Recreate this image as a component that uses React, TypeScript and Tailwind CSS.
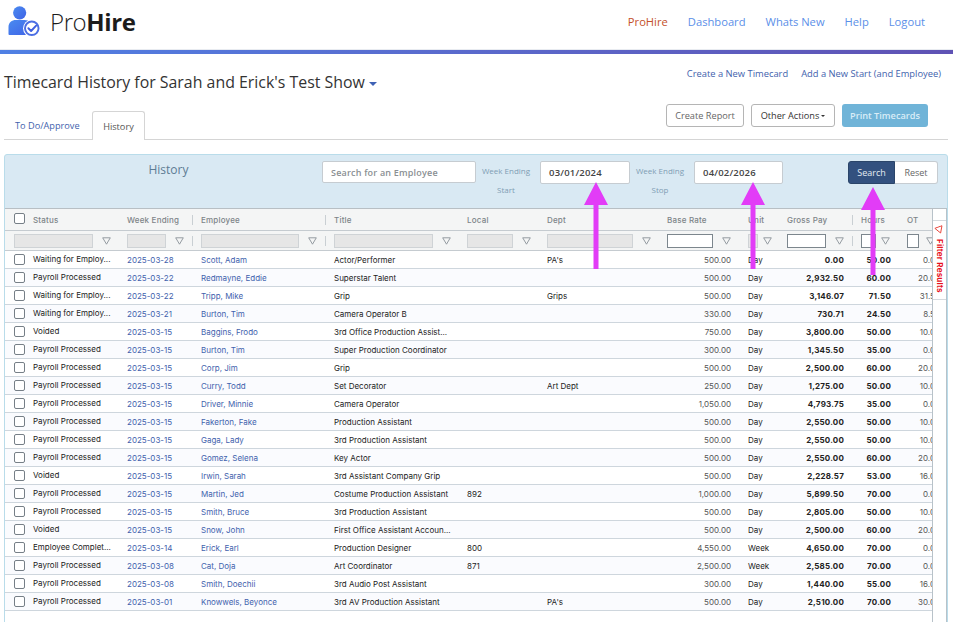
import React from 'react';

type Row = {
  status: string;
  week: string;
  employee: string;
  title: string;
  local?: string;
  dept?: string;
  rate: string;
  unit: string;
  gross: string;
  hours: string;
  ot: string;
};

const WAIT = 'Waiting for Employ...';
const PP = 'Payroll Processed';

const rows: Row[] = [
  { status: WAIT, week: '2025-03-28', employee: 'Scott, Adam', title: 'Actor/Performer', dept: "PA's", rate: '500.00', unit: 'Day', gross: '0.00', hours: '50.00', ot: '0.00' },
  { status: PP, week: '2025-03-22', employee: 'Redmayne, Eddie', title: 'Superstar Talent', rate: '500.00', unit: 'Day', gross: '2,932.50', hours: '60.00', ot: '20.00' },
  { status: WAIT, week: '2025-03-22', employee: 'Tripp, Mike', title: 'Grip', dept: 'Grips', rate: '500.00', unit: 'Day', gross: '3,146.07', hours: '71.50', ot: '31.50' },
  { status: WAIT, week: '2025-03-21', employee: 'Burton, Tim', title: 'Camera Operator B', rate: '330.00', unit: 'Day', gross: '730.71', hours: '24.50', ot: '8.50' },
  { status: 'Voided', week: '2025-03-15', employee: 'Baggins, Frodo', title: '3rd Office Production Assist...', rate: '750.00', unit: 'Day', gross: '3,800.00', hours: '50.00', ot: '10.00' },
  { status: PP, week: '2025-03-15', employee: 'Burton, Tim', title: 'Super Production Coordinator', rate: '300.00', unit: 'Day', gross: '1,345.50', hours: '35.00', ot: '0.00' },
  { status: PP, week: '2025-03-15', employee: 'Corp, Jim', title: 'Grip', rate: '500.00', unit: 'Day', gross: '2,500.00', hours: '60.00', ot: '20.00' },
  { status: PP, week: '2025-03-15', employee: 'Curry, Todd', title: 'Set Decorator', dept: 'Art Dept', rate: '250.00', unit: 'Day', gross: '1,275.00', hours: '50.00', ot: '10.00' },
  { status: PP, week: '2025-03-15', employee: 'Driver, Minnie', title: 'Camera Operator', rate: '1,050.00', unit: 'Day', gross: '4,793.75', hours: '35.00', ot: '0.00' },
  { status: PP, week: '2025-03-15', employee: 'Fakerton, Fake', title: 'Production Assistant', rate: '500.00', unit: 'Day', gross: '2,550.00', hours: '50.00', ot: '10.00' },
  { status: PP, week: '2025-03-15', employee: 'Gaga, Lady', title: '3rd Production Assistant', rate: '500.00', unit: 'Day', gross: '2,550.00', hours: '50.00', ot: '10.00' },
  { status: PP, week: '2025-03-15', employee: 'Gomez, Selena', title: 'Key Actor', rate: '500.00', unit: 'Day', gross: '2,550.00', hours: '60.00', ot: '20.00' },
  { status: 'Voided', week: '2025-03-15', employee: 'Irwin, Sarah', title: '3rd Assistant Company Grip', rate: '500.00', unit: 'Day', gross: '2,228.57', hours: '53.00', ot: '16.00' },
  { status: PP, week: '2025-03-15', employee: 'Martin, Jed', title: 'Costume Production Assistant', local: '892', rate: '1,000.00', unit: 'Day', gross: '5,899.50', hours: '70.00', ot: '0.00' },
  { status: PP, week: '2025-03-15', employee: 'Smith, Bruce', title: '3rd Production Assistant', rate: '500.00', unit: 'Day', gross: '2,805.00', hours: '50.00', ot: '10.00' },
  { status: 'Voided', week: '2025-03-15', employee: 'Snow, John', title: 'First Office Assistant Accoun...', rate: '500.00', unit: 'Day', gross: '2,500.00', hours: '60.00', ot: '20.00' },
  { status: 'Employee Complet...', week: '2025-03-14', employee: 'Erick, Earl', title: 'Production Designer', local: '800', rate: '4,550.00', unit: 'Week', gross: '4,650.00', hours: '70.00', ot: '0.00' },
  { status: PP, week: '2025-03-08', employee: 'Cat, Doja', title: 'Art Coordinator', local: '871', rate: '2,500.00', unit: 'Week', gross: '2,585.00', hours: '70.00', ot: '0.00' },
  { status: PP, week: '2025-03-08', employee: 'Smith, Doechii', title: '3rd Audio Post Assistant', rate: '300.00', unit: 'Day', gross: '1,440.00', hours: '55.00', ot: '16.00' },
  { status: PP, week: '2025-03-01', employee: 'Knowwels, Beyonce', title: '3rd AV Production Assistant', dept: "PA's", rate: '500.00', unit: 'Day', gross: '2,510.00', hours: '70.00', ot: '30.00' },
];

// shared by header, filter row and body so the columns line up
const GRID = 'grid grid-cols-[28px_94px_74px_133px_133px_80px_120px_81px_39px_74px_46px_49px] w-[951px]';

const Funnel = () => (
  <svg width="9" height="8" viewBox="0 0 9 8" className="shrink-0" fill="none" stroke="#8a9299" strokeWidth="0.9">
    <path d="M0.7 0.8H8.3L4.5 7.2Z" />
  </svg>
);

const Check = () => <span className="block w-[11px] h-[11px] rounded-[2px] border border-[#767f87] bg-white" />;

const Sep = () => <span className="absolute left-[-9px] top-[1px] w-px h-[10px] bg-[#c9cfd3]" />;

const HeadCell = ({ label, sep }: { label: string; sep?: boolean }) => (
  <div className="relative flex items-center text-[8px] font-medium tracking-[0.2px] text-[#7d8488]">
    <span className="relative">
      {sep && <Sep />}
      {label}
    </span>
  </div>
);

const FilterCell = ({ w, gap, white, sep }: { w: number; gap: number; white?: boolean; sep?: boolean }) => (
  <div className="relative flex items-center">
    {sep && <span className="absolute left-[-9px] top-[5px] w-px h-[10px] bg-[#c9cfd3]" />}
    <span
      className={white ? 'block h-[14px] bg-white border border-[#7c868d]' : 'block h-[14px] bg-[#e6e6e6] border border-[#cfd3d6]'}
      style={{ width: w, marginRight: gap }}
    />
    <Funnel />
  </div>
);

const Arrow = ({ left, top, height }: { left: number; top: number; height: number }) => (
  <svg
    className="absolute z-10"
    style={{ left, top }}
    width="24"
    height={height}
    viewBox={`0 0 24 ${height}`}
    fill="#e23cf7"
  >
    <path d={`M12 0L24 23H14.5V${height}H9.5V23H0Z`} />
  </svg>
);

const Logo = () => (
  <svg width="33" height="32" viewBox="0 2.5 34 33" className="shrink-0">
    <defs>
      <linearGradient id="lg" x1="0" y1="0" x2="1" y2="1">
        <stop offset="0" stopColor="#4a8bf0" />
        <stop offset="1" stopColor="#3f63e6" />
      </linearGradient>
    </defs>
    <circle cx="12" cy="9.5" r="6.8" fill="url(#lg)" />
    <path d="M0.5 31V24C0.5 19.5 4 17 8 17H17C22 17 24 20 24 24V31C24 32 23 32.5 22 32.5H2C1 32.5 0.5 32 0.5 31Z" fill="url(#lg)" />
    <circle cx="24.5" cy="25.5" r="9" fill="#fff" />
    <circle cx="24.5" cy="25.5" r="7" fill="#fff" stroke="#4c6fe4" strokeWidth="2" />
    <path d="M21 25.5L23.8 28.3L29 22.8" fill="none" stroke="#3f5fe0" strokeWidth="2" strokeLinecap="round" strokeLinejoin="round" />
  </svg>
);

export default function App() {
  return (
    <div className="relative w-[953px] h-[622px] overflow-hidden bg-white font-['Open_Sans',sans-serif]">
      {/* top nav */}
      <header className="h-[50px] flex items-center justify-between pl-[8px] pr-[28px] border-b border-[#e8ebf0]">
        <div className="flex items-center gap-[9px] pb-[6px]">
          <Logo />
          <span className="text-[24px] leading-none text-[#1c1c1c] tracking-[-0.4px] font-light">
            Pro<span className="font-bold">Hire</span>
          </span>
        </div>
        <nav className="flex gap-[20px] text-[11.2px] text-[#5b8fe8] pb-[5px]">
          <a className="text-[#c4502a]">ProHire</a>
          <a>Dashboard</a>
          <a>Whats New</a>
          <a>Help</a>
          <a>Logout</a>
        </nav>
      </header>
      <div className="h-[4px] bg-gradient-to-r from-[#4f80e4] to-[#5f52b4]" />

      {/* title row */}
      <div className="flex justify-between items-start pl-[4px] pr-[12px] h-[50px]">
        <h1 className="mt-[17px] h-[22px] text-[15.9px] leading-[22px] text-[#333] flex items-center gap-[4px]">
          Timecard History for Sarah and Erick's Test Show
          <span className="mt-[3px] w-0 h-0 border-x-[4px] border-x-transparent border-t-[4px] border-t-[#3f62b5]" />
        </h1>
        <div className="mt-[13px] flex gap-[13px] text-[9.35px] leading-[13px] text-[#3f62ad]">
          <a>Create a New Timecard</a>
          <a>Add a New Start (and Employee)</a>
        </div>
      </div>

      {/* tabs and actions */}
      <div className="flex justify-between items-end h-[36px] mx-[4px] mr-[5px] border-b border-[#d5d5d5]">
        <div className="flex h-[28px] text-[9.2px]">
          <a className="pl-[11px] pr-[12px] pt-[1px] flex items-center text-[#3f62ad]">To Do/Approve</a>
          <span className="px-[10.5px] pt-[1px] flex items-center text-[#555] bg-white border border-b-0 border-[#d5d5d5] rounded-t-[3px] mb-[-1px] h-[29px]">
            History
          </span>
        </div>
        <div className="flex gap-[7px] mb-[12px] mr-[20px] text-[9.2px]">
          <span className="h-[23px] w-[78px] flex items-center justify-center rounded-[3px] border border-[#b5b5b5] text-[#666]">Create Report</span>
          <span className="h-[23px] w-[84px] flex items-center justify-center gap-[2px] rounded-[3px] border border-[#b5b5b5] text-[#333]">
            Other Actions
            <span className="w-0 h-0 border-x-[2px] border-x-transparent border-t-[2px] border-t-[#333]" />
          </span>
          <span className="h-[23px] w-[86px] flex items-center justify-center rounded-[3px] bg-[#70b4d8] text-[#d9edf7] font-semibold">Print Timecards</span>
        </div>
      </div>

      {/* history panel */}
      <section className="mt-[14px] ml-[4px] w-[944px] h-[480px] bg-[#d9e9f3] border border-[#b9dcea] rounded-t-[3px]">
        <div className="relative h-[53px] flex">
          <div className="w-[317px] text-center text-[12px] text-[#5d7c93] pt-[6px] pl-[10px] leading-[18px]">History</div>
          <input
            readOnly
            placeholder="Search for an Employee"
            className="mt-[6px] w-[154px] h-[22px] bg-white rounded-[2px] border border-[#c6ccd1] px-[8px] text-[9px] font-semibold tracking-[0.2px] placeholder:text-[#8a8f93]"
          />
          <div className="w-[64px] pr-[4px] text-center text-[8px] leading-[19px] text-[#7f9db3] pt-[6px]">
            <div>Week Ending</div>
            <div>Start</div>
          </div>
          <div className="mt-[6px] w-[90px] h-[23px] bg-white rounded-[2px] border border-[#c6ccd1] pl-[8px] text-[9.5px] font-semibold leading-[21px] tracking-[0.2px] text-[#444]">03/01/2024</div>
          <div className="w-[64px] pr-[4px] text-center text-[8px] leading-[19px] text-[#7f9db3] pt-[6px]">
            <div>Week Ending</div>
            <div>Stop</div>
          </div>
          <div className="mt-[6px] w-[89px] h-[23px] bg-white rounded-[2px] border border-[#c6ccd1] pl-[8px] text-[9.5px] font-semibold leading-[21px] tracking-[0.2px] text-[#444]">04/02/2026</div>
          <div className="mt-[6px] ml-[65px] flex text-[9px]">
            <span className="w-[47px] h-[23px] flex items-center justify-center bg-[#33517f] text-[#e4ebf3] rounded-l-[3px] border border-[#2b4569]">Search</span>
            <span className="w-[43px] h-[23px] flex items-center justify-center bg-white text-[#666] rounded-r-[3px] border border-l-0 border-[#c6ccd1]">Reset</span>
          </div>
        </div>

        <div className="flex h-[430px] bg-white border-t border-[#b8bfc4] font-['Inter',sans-serif]">
          {/* table */}
          <div className="w-[927px] overflow-hidden shrink-0">
            <div className={`${GRID} h-[22px] bg-[#f4f5f5] border-b border-[#c5cbd0]`}>
              <div className="flex items-center pl-[9px] pb-[3px]"><Check /></div>
              <HeadCell label="Status" />
              <HeadCell label="Week Ending" />
              <HeadCell label="Employee" sep />
              <HeadCell label="Title" sep />
              <HeadCell label="Local" />
              <HeadCell label="Dept" />
              <HeadCell label="Base Rate" />
              <HeadCell label="Unit" />
              <HeadCell label="Gross Pay" />
              <HeadCell label="Hours" sep />
              <HeadCell label="OT" />
            </div>
            <div className={`${GRID} h-[20px] bg-[#f4f5f5] border-b border-[#c5cbd0]`}>
              <div className="col-span-2 flex items-center pl-[9px]">
                <span className="block w-[79px] h-[14px] bg-[#e6e6e6] border border-[#cfd3d6] mr-[9px]" />
                <Funnel />
              </div>
              <FilterCell w={39} gap={9} />
              <FilterCell w={98} gap={9} sep />
              <FilterCell w={99} gap={9} sep />
              <FilterCell w={46} gap={9} />
              <FilterCell w={86} gap={9} />
              <FilterCell w={46} gap={9} white />
              <FilterCell w={10} gap={5} />
              <FilterCell w={39} gap={9} white />
              <FilterCell w={15} gap={5} white sep />
              <FilterCell w={12} gap={7} white />
            </div>
            {rows.map((r, i) => (
              <div
                key={i}
                className={`${GRID} h-[18px] border-b border-[#ced6dd] text-[8px] text-[#222] ${i % 2 ? 'bg-[#fafbfe]' : 'bg-white'}`}
              >
                <div className="flex items-center pl-[9px]"><Check /></div>
                <div className="flex items-center pb-[2px] whitespace-nowrap">{r.status}</div>
                <div className="flex items-center text-[#3f62ad]">{r.week}</div>
                <div className="flex items-center text-[#3f62ad]">{r.employee}</div>
                <div className="flex items-center whitespace-nowrap">{r.title}</div>
                <div className="flex items-center">{r.local}</div>
                <div className="flex items-center">{r.dept}</div>
                <div className="flex items-center justify-end pr-[17px] text-[#555]">{r.rate}</div>
                <div className="flex items-center">{r.unit}</div>
                <div className="flex items-center justify-end pr-[17px] font-bold tracking-[0.2px]">{r.gross}</div>
                <div className="flex items-center justify-end pr-[16px] font-bold tracking-[0.2px]">{r.hours}</div>
                <div className="flex items-center justify-end pr-[16px] text-[#555]">{r.ot}</div>
              </div>
            ))}
          </div>

          {/* filter rail */}
          <div className="w-[15px] border-x border-[#b8c2c9] bg-white">
            <div className="mt-[11px] h-[80px] border-y border-[#d5dade] flex flex-col items-center pt-[5px] gap-[5px]">
              <svg width="9" height="8" viewBox="0 0 9 8" fill="none" stroke="#e8443a" strokeWidth="0.9" className="-rotate-20">
                <path d="M0.7 0.8H8.3L4.5 7.2Z" />
              </svg>
              <span className="[writing-mode:vertical-rl] text-[8px] font-bold text-[#e8101c] tracking-[0.2px] leading-[13px] whitespace-nowrap">Filter Results</span>
            </div>
          </div>
        </div>
      </section>

      {/* annotation arrows */}
      <Arrow left={584} top={182} height={87} />
      <Arrow left={741} top={182} height={87} />
      <Arrow left={861} top={187} height={88} />
    </div>
  );
}
